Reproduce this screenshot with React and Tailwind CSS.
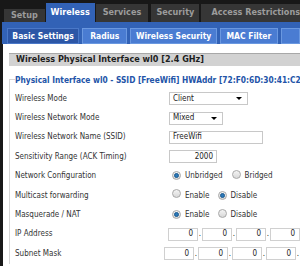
import React from "react";

const font = { fontFamily: '"DejaVu Sans Condensed", "DejaVu Sans", sans-serif' };

function Radio({ checked }) {
  return (
    <span className="inline-flex items-center justify-center w-[9px] h-[9px] rounded-full border border-[#a8a8a8] bg-gradient-to-b from-[#f4f4f4] to-[#d8d8d8]">
      {checked && <span className="w-[5px] h-[5px] rounded-full bg-[#2a78b8] border border-[#1c5a90]" />}
    </span>
  );
}

function RadioPair({ a, b, first, gap }) {
  return (
    <div className="flex items-center text-[8px] text-[#333]">
      <span className="ml-[3px]"><Radio checked={first} /></span>
      <span className="ml-[4px]">{a}</span>
      <span className={gap}><Radio checked={!first} /></span>
      <span className="ml-[4px]">{b}</span>
    </div>
  );
}

function Select({ value, w }) {
  return (
    <div className={`flex items-center justify-between h-[13px] ${w} border border-[#c8c8c8] bg-white px-[3px] text-[8px] text-[#222]`}>
      <span>{value}</span>
      <span className="w-0 h-0 border-l-[3px] border-r-[3px] border-t-[3px] border-l-transparent border-r-transparent border-t-black mr-[2px]" />
    </div>
  );
}

function Octets({ trail }) {
  return (
    <div className="flex items-center text-[8px] text-[#222]">
      {[0, 1, 2, 3].map((i) => (
        <React.Fragment key={i}>
          <div className="w-[30px] h-[13px] border border-[#d0d0d0] bg-white flex items-center justify-end pr-[4px]">0</div>
          {(i < 3 || trail) && <span className="w-[4px] text-center">.</span>}
        </React.Fragment>
      ))}
    </div>
  );
}

export default function App() {
  const rows = [
    ["Wireless Mode", <Select value="Client" w="w-[79px]" />],
    ["Wireless Network Mode", <Select value="Mixed" w="w-[54px]" />],
    ["Wireless Network Name (SSID)", <div className="h-[13px] w-[94px] border border-[#c8c8c8] bg-white px-[3px] flex items-center text-[8px] text-[#222]">FreeWifi</div>],
    ["Sensitivity Range (ACK Timing)", <div className="h-[13px] w-[48px] border border-[#c8c8c8] bg-white px-[3px] flex items-center justify-end text-[8px] text-[#222]">2000</div>],
    ["Network Configuration", <RadioPair a="Unbridged" b="Bridged" first gap="ml-[9px]" />],
    ["Multicast forwarding", <RadioPair a="Enable" b="Disable" first={false} gap="ml-[8px]" />],
    ["Masquerade / NAT", <RadioPair a="Enable" b="Disable" first gap="ml-[8px]" />],
    ["IP Address", <Octets />],
    ["Subnet Mask", <Octets trail />],
  ];

  return (
    <div className="w-[300px] h-[266px] overflow-hidden bg-[#181818]" style={font}>
      {/* top tabs */}
      <div className="h-[22px] flex items-end pl-[4px] text-[9px] font-bold">
        <div className="w-[44px] h-[13px] bg-[#363636] text-[#9c9c9c] flex items-center justify-center">Setup</div>
        <div className="w-[53px] h-[19px] ml-[1px] bg-[#3262b6] text-white flex items-center justify-center">Wireless</div>
        <div className="w-[57px] h-[18px] ml-[1px] bg-[#363636] text-[#9c9c9c] flex items-center justify-center">Services</div>
        <div className="w-[52px] h-[18px] ml-[3px] bg-[#363636] text-[#9c9c9c] flex items-center justify-center">Security</div>
        <div className="w-[100px] h-[18px] ml-[2px] bg-[#363636] text-[#9c9c9c] flex items-center pl-[10px] whitespace-nowrap">Access Restrictions</div>
      </div>
      {/* sub tabs */}
      <div className="h-[22px] ml-[2px] bg-[#3262b6] flex items-end pl-[5px] gap-[3px] text-[8.5px] font-bold text-white">
        <div className="w-[75px] h-[16px] bg-[#2c56a6] border border-[#4a78c8] flex items-center justify-center">Basic Settings</div>
        <div className="w-[47px] h-[16px] bg-[#4a7cd2] border border-[#6a98e0] flex items-center justify-center">Radius</div>
        <div className="w-[90px] h-[16px] bg-[#4a7cd2] border border-[#6a98e0] flex items-center justify-center">Wireless Security</div>
        <div className="w-[60px] h-[16px] bg-[#4a7cd2] border border-[#6a98e0] flex items-center justify-center">MAC Filter</div>
        <div className="w-[20px] h-[16px] bg-[#4a7cd2] border border-[#6a98e0]" />
      </div>
      {/* content */}
      <div className="ml-[3px] h-[222px] bg-white pt-[9px] pl-[6px]">
        <div className="h-[13px] bg-[#d2d2d2] border-t border-[#a8a8a8] pl-[7px] flex items-center text-[9px] font-bold text-[#1e1e1e] whitespace-nowrap">
          Wireless Physical Interface wl0 [2.4 GHz]
        </div>
        <div className="mt-[13px] border-l border-t border-[#d6d6d6] relative">
          <div className="absolute -top-[6px] left-[5px] bg-white pr-[2px] text-[8.3px] font-bold text-[#2354a8] whitespace-nowrap">
            Physical Interface wl0 - SSID [FreeWifi] HWAddr [72:F0:6D:30:41:C2]
          </div>
          <div className="pt-[9px]">
            {rows.map(([label, field]) => (
              <div key={label} className="h-[19.4px] flex items-center">
                <div className="w-[159px] pl-[5px] text-[8px] text-[#333] whitespace-nowrap">{label}</div>
                <div>{field}</div>
              </div>
            ))}
          </div>
        </div>
      </div>
    </div>
  );
}
